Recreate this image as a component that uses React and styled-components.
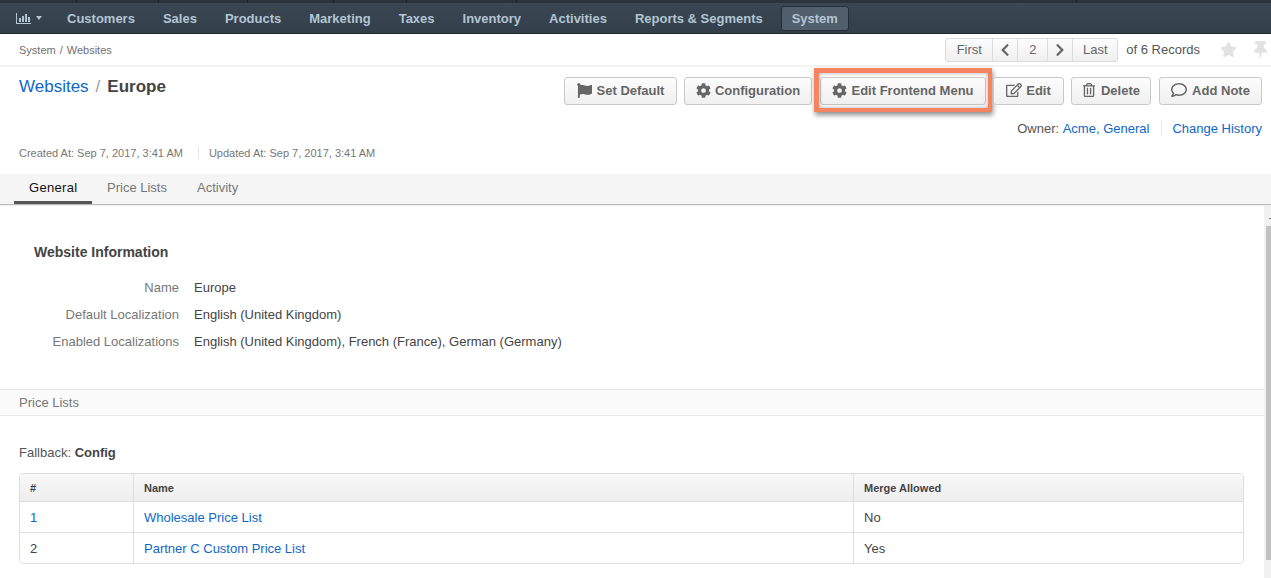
import React from "react";
import styled, { createGlobalStyle } from "styled-components";
import { FaFlag, FaCog, FaRegEdit, FaRegTrashAlt, FaRegComment, FaStar, FaThumbtack, FaChevronLeft, FaChevronRight } from "react-icons/fa";

const Global = createGlobalStyle`
  html, body { margin: 0; padding: 0; height: 100%; overflow: hidden; background: #fff; }
  body { font-family: "Liberation Sans", Arial, sans-serif; font-size: 13px; color: #444; }
  * { box-sizing: border-box; }
`;
const Page = styled.div`height: 578px; width: 1271px; overflow: hidden; position: relative; background: #fff;`;
const TopStrip = styled.div`height: 3px; background: #2b343c; display: flex;`;
const StripCell = styled.span`width: ${p => p.$w}px; height: 3px; border-right: 1px solid #1c2329;`;
const Nav = styled.nav`
  height: 31px; background: linear-gradient(#3a4752, #333f4a); border-bottom: 1px solid #1f272e;
  display: flex; align-items: center; padding-left: 16px;
`;
const NavLogo = styled.span`display: flex; align-items: center; gap: 5px; width: 27px; margin-right: 24px;`;
const Caret = styled.span`width: 0; height: 0; border: 3.5px solid transparent; border-top: 4px solid #b3c5d3; border-bottom: 0; flex: none;`;
const NavItem = styled.span`
  font-size: 13px; font-weight: 700; color: #b3c5d3; margin-right: 28px; white-space: nowrap;
`;
const NavActive = styled.span`
  font-size: 13px; font-weight: 700; color: #b3c5d3; background: #515f6d; border: 1px solid #262f37; border-radius: 3px;
  height: 25px; width: 68px; display: flex; align-items: center; justify-content: center; margin-left: -10px; margin-top: 0;
`;
const Crumbs = styled.div`
  height: 33px; border-bottom: 2px solid #f3f3f3; display: flex; align-items: center; padding: 0 0 0 19px;
  justify-content: space-between;
`;
const CrumbText = styled.span`font-size: 11px; color: #707070;`;
const CrumbSep = styled.span`margin: 0 4px;`;
const Pager = styled.div`display: flex; align-items: center; margin-right: 2px;`;
const PagerGroup = styled.div`
  display: flex; height: 24px; border: 1px solid #dcdcdc; border-radius: 3px; margin-right: 8px;
  background: linear-gradient(#fdfdfd, #efefef);
`;
const PagerCell = styled.span`
  width: ${p => p.$w}px; display: flex; align-items: center; justify-content: center; font-size: 13px; color: #666;
  border-left: ${p => (p.$first ? "0" : "1px solid #dcdcdc")};
`;
const PagerNote = styled.span`font-size: 13px; color: #555; margin-right: 20px;`;
const MutedIcons = styled.span`display: flex; align-items: center; gap: 15px; color: #e2e2e2; font-size: 17px; margin-top: -1px;`;
const Header = styled.header`height: 107px; display: flex; justify-content: space-between; padding: 0 9px 0 19px;`;
const HeaderLeft = styled.div`display: flex; flex-direction: column;`;
const Title = styled.div`font-size: 17px; margin-top: 10px; line-height: 20px; color: #999; display: flex; gap: 7px;`;
const TitleLink = styled.a`color: #0f67c6;`;
const TitleStrong = styled.b`color: #444;`;
const Meta = styled.div`display: flex; align-items: center; margin-top: 49px; font-size: 11px; color: #777; height: 14px;`;
const MetaItem = styled.span`
  padding-right: ${p => (p.$first ? "15px" : "0")};
  margin-right: ${p => (p.$first ? "10px" : "0")};
  border-right: ${p => (p.$first ? "1px solid #e6e6e6" : "0")};
  line-height: 14px;
`;
const HeaderRight = styled.div`display: flex; flex-direction: column; align-items: flex-end;`;
const Actions = styled.div`display: flex; gap: 7px; margin-top: 10px;`;
const Btn = styled.span`
  position: relative; height: 28px; width: ${p => p.$w}px; display: flex; align-items: center; justify-content: center; gap: ${p => p.$gap}px;
  border: 1px solid #c9c9c9; border-radius: 3px; background: linear-gradient(#fdfdfd, #f0f0f0);
  font-size: 13px; font-weight: 700; color: #666; white-space: nowrap; padding-bottom: 2px;
  margin-left: ${p => (p.$wide ? "1px" : "0")};
  svg { color: #666; font-size: ${p => p.$icon}px; flex: none; }
  ${p => p.$hl && `
    &::after {
      content: ""; position: absolute; left: -7px; right: -7px; top: -10px; bottom: -8px;
      border-style: solid; border-color: #f58561; border-width: 5px 4px 4px 5px;
      box-shadow: 1px 3px 5px rgba(0,0,0,.45), inset 0 0 4px rgba(0,0,0,.35); pointer-events: none;
    }
  `}
`;
const Owner = styled.div`display: flex; align-items: center; margin-top: 16px; font-size: 13px; color: #555; height: 15px;`;
const Link = styled.a`color: #0f67c6;`;
const OwnerRule = styled.span`width: 1px; height: 15px; background: #e6e6e6; margin: 0 10px 0 12px;`;
const Tabs = styled.div`
  height: 31px; background: #f5f5f5; border-bottom: 1px solid #b8b8b8; display: flex; padding-left: 14px;
  box-shadow: 0 1px 0 #f2f2f2;
`;
const Tab = styled.span`
  height: 30px; padding: 0 15px; display: flex; align-items: center; font-size: 13px; flex: none;
  color: ${p => (p.$active ? "#111" : "#777")};
  letter-spacing: ${p => (p.$active ? ".3px" : "0")};
  border-bottom: 3px solid ${p => (p.$active ? "#555" : "transparent")};
  width: ${p => p.$w}px;
`;
const Body = styled.div`position: relative; padding: 39px 7px 0 0;`;
const Scroll = styled.div`
  position: absolute; right: 0; top: 0; width: 7px; background: #f1f1f1; padding: 21px 0 0 2px; height: 373px;
  &::before { content: ""; position: absolute; right: 0; top: 13px; width: 2px; height: 1px; background: #777; }
`;
const Thumb = styled.div`height: 334px; background: #c1c1c1;`;
const InfoTitle = styled.h3`margin: 0 0 0 34px; font-size: 14px; line-height: 16px; font-weight: 700; color: #444;`;
const InfoGrid = styled.dl`
  margin: 14px 0 0; display: grid; grid-template-columns: 179px 1fr; column-gap: 15px; row-gap: 0;
`;
const Dt = styled.dt`text-align: right; color: #777; font-size: 13px; line-height: 27px;`;
const Dd = styled.dd`margin: 0; color: #444; font-size: 13px; line-height: 27px;`;
const SectionBar = styled.div`
  margin-top: 34px; height: 27px; background: #fbfbfb; border-top: 1px solid #e8e8e8; border-bottom: 1px solid #e8e8e8;
  padding-left: 19px; display: flex; align-items: center; color: #777; font-size: 13px;
`;
const Fallback = styled.div`margin: 29px 0 0 19px; font-size: 13px; line-height: 16px; color: #555;`;
const FallbackValue = styled.b`color: #444;`;
const TableWrap = styled.div`
  margin: 12px 0 0 19px; width: 1225px; border: 1px solid #dedede; border-radius: 4px; overflow: hidden;
`;
const Row = styled.div`
  display: grid; grid-template-columns: 114px 720px 1fr; height: ${p => (p.$head ? "27px" : "31px")};
  background: ${p => (p.$head ? "linear-gradient(#f8f8f8, #eeeeee)" : "#fff")};
  border-top: ${p => (p.$head ? "0" : "1px solid #dedede")};
`;
const Cell = styled.div`
  padding-left: 10px; display: flex; align-items: center;
  border-right: ${p => (p.$last ? "0" : "1px solid #dedede")};
  font-size: ${p => (p.$head ? "11px" : "13px")}; font-weight: ${p => (p.$head ? 700 : 400)};
  color: #444;
`;

const ChartIcon = () => (
  <svg width="15" height="11" viewBox="0 0 15 11" style={{ flex: "none" }} fill="#b3c5d3">
    <rect x="0" y="0" width="1" height="11" />
    <rect x="0" y="10" width="15" height="1" />
    <rect x="3" y="5" width="2" height="4" />
    <rect x="6" y="3" width="2" height="6" />
    <rect x="9" y="1" width="2" height="8" />
    <rect x="12" y="4" width="2" height="5" />
  </svg>
);

const strip = [77, 82, 89, 86, 73, 110, 560];
const nav = ["Customers", "Sales", "Products", "Marketing", "Taxes", "Inventory", "Activities", "Reports & Segments"];
const actions = [
  { label: "Set Default", icon: <FaFlag />, w: 113, size: 15, gap: 5 },
  { label: "Configuration", icon: <FaCog />, w: 128, size: 15, gap: 4 },
  { label: "Edit Frontend Menu", icon: <FaCog />, w: 166, size: 15, gap: 4, hl: true, wide: true },
  { label: "Edit", icon: <FaRegEdit />, w: 71, size: 16, gap: 4 },
  { label: "Delete", icon: <FaRegTrashAlt />, w: 80, size: 14, gap: 5 },
  { label: "Add Note", icon: <FaRegComment />, w: 103, size: 16, gap: 5, wide: true },
];

export default function App() {
  return (
    <Page>
      <Global />
      <TopStrip>{strip.map((w, i) => <StripCell key={i} $w={w} />)}</TopStrip>
      <Nav>
        <NavLogo><ChartIcon /><Caret /></NavLogo>
        {nav.map(n => <NavItem key={n}>{n}</NavItem>)}
        <NavActive>System</NavActive>
      </Nav>
      <Crumbs>
        <CrumbText>System<CrumbSep>/</CrumbSep>Websites</CrumbText>
        <Pager>
          <PagerGroup>
            <PagerCell $first $w={46}>First</PagerCell>
            <PagerCell $w={25}><FaChevronLeft size={14} /></PagerCell>
            <PagerCell $w={30}>2</PagerCell>
            <PagerCell $w={25}><FaChevronRight size={14} /></PagerCell>
            <PagerCell $w={45}>Last</PagerCell>
          </PagerGroup>
          <PagerNote>of 6 Records</PagerNote>
          <MutedIcons><FaStar /><FaThumbtack /></MutedIcons>
        </Pager>
      </Crumbs>
      <Header>
        <HeaderLeft>
          <Title><TitleLink>Websites</TitleLink><span>/</span><TitleStrong>Europe</TitleStrong></Title>
          <Meta>
            <MetaItem $first>Created At: Sep 7, 2017, 3:41 AM</MetaItem>
            <MetaItem>Updated At: Sep 7, 2017, 3:41 AM</MetaItem>
          </Meta>
        </HeaderLeft>
        <HeaderRight>
          <Actions>
            {actions.map(a => <Btn key={a.label} $w={a.w} $hl={a.hl} $wide={a.wide} $icon={a.size} $gap={a.gap}>{a.icon}{a.label}</Btn>)}
          </Actions>
          <Owner>
            Owner:&nbsp;<Link>Acme, General</Link><OwnerRule /><Link>Change History</Link>
          </Owner>
        </HeaderRight>
      </Header>
      <Tabs>
        <Tab $active $w={78}>General</Tab>
        <Tab $w={90}>Price Lists</Tab>
        <Tab $w={80}>Activity</Tab>
      </Tabs>
      <Body>
        <Scroll><Thumb /></Scroll>
        <InfoTitle>Website Information</InfoTitle>
        <InfoGrid>
          <Dt>Name</Dt><Dd>Europe</Dd>
          <Dt>Default Localization</Dt><Dd>English (United Kingdom)</Dd>
          <Dt>Enabled Localizations</Dt><Dd>English (United Kingdom), French (France), German (Germany)</Dd>
        </InfoGrid>
        <SectionBar>Price Lists</SectionBar>
        <Fallback>Fallback: <FallbackValue>Config</FallbackValue></Fallback>
        <TableWrap>
          <Row $head>
            <Cell $head>#</Cell><Cell $head>Name</Cell><Cell $head $last>Merge Allowed</Cell>
          </Row>
          <Row>
            <Cell><Link>1</Link></Cell><Cell><Link>Wholesale Price List</Link></Cell><Cell $last>No</Cell>
          </Row>
          <Row>
            <Cell>2</Cell><Cell><Link>Partner C Custom Price List</Link></Cell><Cell $last>Yes</Cell>
          </Row>
        </TableWrap>
      </Body>
    </Page>
  );
}
